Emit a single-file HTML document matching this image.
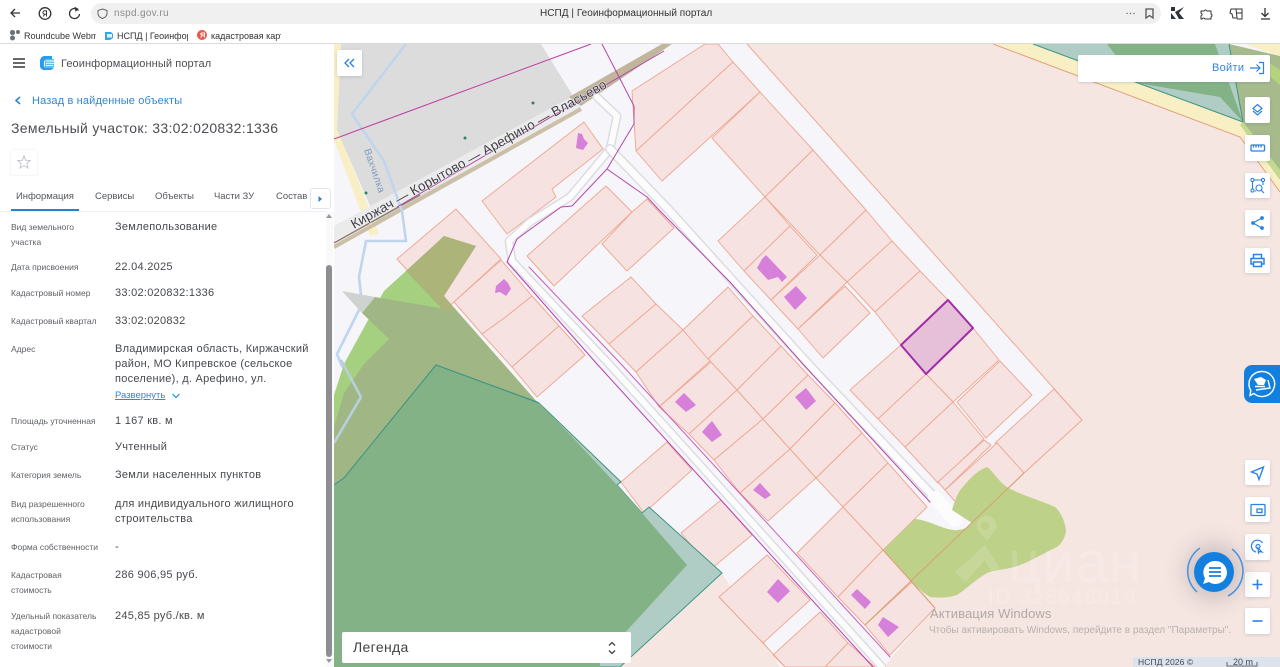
<!DOCTYPE html>
<html lang="ru"><head><meta charset="utf-8"><title>НСПД | Геоинформационный портал</title>
<style>
html,body{margin:0;padding:0;width:1280px;height:667px;overflow:hidden;background:#fff;font-family:"Liberation Sans","Noto Sans CJK SC",sans-serif}
#w{position:absolute;left:0;top:0;width:1280px;height:667px;overflow:hidden;filter:blur(.35px)}
#map{position:absolute;left:0;top:0}
.t{position:absolute;white-space:nowrap;line-height:14px;height:14px}
.l{font-size:8.5px;color:#5e6166;letter-spacing:0;left:11px}
.v{font-size:11px;color:#46494e;letter-spacing:.27px;left:115px;margin-top:1px}
.tab{font-size:9.5px;color:#54575c;top:190px;letter-spacing:-.03px}
.btn{position:absolute;background:#fff;border-radius:2px;box-shadow:0 1px 3px rgba(70,90,120,.22);left:1245px;width:25px;height:25px}
.btn svg{position:absolute;left:0;top:0}
.bar{position:absolute;left:0;top:0;width:1280px;height:44px;background:#fff;border-bottom:1px solid #dcdcdc;box-sizing:border-box}
</style></head><body><div id="w">
<svg id="map" width="1280" height="667" viewBox="0 0 1280 667">
<defs><clipPath id="c"><rect x="334" y="44" width="946" height="623"/></clipPath></defs>
<g clip-path="url(#c)">
<rect x="334" y="44" width="946" height="623" fill="#f5f5fa"/>
<!-- top-left -->
<polygon points="334,44 341,44 337,127 379,234 370,236 334,140" fill="#f9efc4"/>
<polygon points="341,44 541,44 581,109 377,222 337,130" fill="#dcdcdc"/>
<polygon points="334,226 571,97 581,109 334,241" fill="#ebebec"/>
<polyline points="334,247 377,223 581,109" fill="none" stroke="#cbbfa7" stroke-width="4"/>
<polygon points="569,97 662,44 672,44 581,106" fill="#c1b69c"/>
<polyline points="334,243 420,195" fill="none" stroke="#8d7d6e" stroke-width="1.5"/>
<polyline points="406,44 352,114 384,161 402,211 406,241 366,241 359,277 362,304 337,354 341,364 361,397 334,443" fill="none" stroke="#bfd5ee" stroke-width="2.6"/>
<polyline points="334,139 591,44" fill="none" stroke="#c0399f" stroke-width="1"/>
<polyline points="397,207 664,51" fill="none" stroke="#b548a8" stroke-width="1"/>
<circle cx="533" cy="103" r="1.5" fill="#2e8468"/><circle cx="465" cy="138" r="1.5" fill="#2e8468"/><circle cx="366" cy="193" r="1.5" fill="#2e8468"/>
<text transform="translate(364,150) rotate(71)" font-size="10" fill="#7f9dbf" letter-spacing=".3" font-family="Liberation Sans">Вахчилка</text>
<!-- top right -->
<polygon points="993,44 1240,137 1280,192 1280,170 1243,122 1033,44" fill="#f8efc5"/>
<polygon points="1033,44 1229,44 1243,122" fill="#afcdc5"/>
<polygon points="1107,44 1215,44 1243,122 1220,97 1137,83" fill="#84b287"/>
<polygon points="1229,44 1280,44 1280,56 1250,44" fill="#dddfe0"/>
<polygon points="1229,44 1280,56 1280,170 1243,122" fill="#a7ba8c"/>
<polygon points="1244,44 1280,44 1280,56" fill="#f8efc5"/>
<polygon points="1265,60 1280,70 1280,85 1268,75" fill="#b5d27d"/>
<polygon points="1243,122 1280,170 1280,180 1240,125" fill="#c4d98f"/>
<polyline points="1033,44 1243,122" fill="none" stroke="#3f9583" stroke-width="1"/>
<polyline points="1229,44 1243,122" fill="none" stroke="#3f9583" stroke-width="1"/>
<!-- big pink -->
<polygon points="993,44 1240,137 1280,192 1280,667 620,667 722,573 780,667 885,667 892,657 935,608 912,580 1024,473 1082,420 747,44" fill="#f6e6e2"/>
<polyline points="993,44 1240,137 1280,192" fill="none" stroke="#e2a27f" stroke-width="1"/>
<polyline points="747,44 1082,420 1024,473 912,580" fill="none" stroke="#efa993" stroke-width="1"/>
<!-- parcels -->
<g fill="#f6e3e1" stroke="#efa993" stroke-width=".95" stroke-linejoin="round">
<polygon points="632,91 705,44 718,44 733,62 636,151"/>
<polygon points="733,62 760,92 662,181 636,151"/>
<polygon points="760,92 813,150 765,197 712,138"/>
<polygon points="813,150 866,210 820,255 765,197"/>
<polygon points="866,210 892,241 847,282 820,255"/>
<polygon points="892,241 920,271 875,312 847,282"/>
<polygon points="920,271 948,300 901,345 875,312"/>
<polygon points="973,328 999,360 953,402 926,374"/>
<polygon points="1000,361 1032,395 986,438 957,402"/>
<polygon points="1054,389 1082,420 1024,473 995,443"/>
<polygon points="718,241 765,197 790,226 744,271"/>
<polygon points="744,271 790,226 817,255 771,300"/>
<polygon points="771,300 820,255 847,282 798,329"/>
<polygon points="798,329 845,286 870,313 823,358"/>
<polygon points="901,345 926,374 878,419 850,390"/>
<polygon points="926,374 953,402 905,447 878,419"/>
<polygon points="953,402 984,439 938,483 905,447"/>
<polygon points="984,440 991,445 945,490 938,482"/>
<polygon points="997,443 1024,473 973,522 945,490"/>
<polygon points="527,256 606,186 632,212 554,286"/>
<polygon points="632,212 647,199 674,228 627,271 602,244"/>
<polygon points="582,316 631,277 656,304 609,344"/>
<polygon points="609,344 656,304 683,330 636,372"/>
<polygon points="636,372 683,330 710,361 659,407"/>
<polygon points="683,330 728,287 753,316 708,359"/>
<polygon points="708,359 753,316 781,346 737,390"/>
<polygon points="659,407 711,362 737,390 689,434"/>
<polygon points="689,434 737,390 763,419 714,460"/>
<polygon points="714,460 763,419 790,449 740,493"/>
<polygon points="781,346 808,375 763,419 737,390"/>
<polygon points="808,375 835,403 790,449 763,419"/>
<polygon points="835,403 862,433 816,478 790,449"/>
<polygon points="862,433 888,463 843,507 816,478"/>
<polygon points="888,463 927,507 883,550 843,507"/>
<polygon points="740,493 790,449 816,478 768,521"/>
<polygon points="797,553 843,507 883,550 838,597"/>
<polygon points="838,597 883,550 912,582 865,625"/>
<polygon points="865,625 912,582 935,608 890,655"/>
<polygon points="482,201 584,122 603,149 552,189 556,197 507,234"/>
<polygon points="397,259 456,209 501,259 454,302 444,311"/>
<polygon points="454,302 501,260 532,296 507,316 482,334"/>
<polygon points="482,334 507,316 532,296 559,326 512,367"/>
<polygon points="512,367 559,326 585,355 537,397"/>
<polygon points="621,482 667,442 692,470 644,513"/>
<polygon points="681,533 721,500 752,535 711,569"/>
<polygon points="719,597 767,555 810,600 763,643"/>
<polygon points="773,655 820,612 848,643 825,667 785,667"/>
<polygon points="825,667 848,643 875,667"/>
<polyline points="719,597 763,643 785,667" fill="none"/>
</g>
<polygon points="901,345 948,300 973,328 926,374" fill="#e6bfd8" stroke="#a12ca6" stroke-width="2" stroke-linejoin="round"/>
<!-- roads -->
<g fill="none" stroke-linejoin="round" stroke-linecap="round">
<polyline points="597,97 617,116 610,149 570,197 530,222 509,241 512,261 609,364 882,667" stroke="#dcdde2" stroke-width="9"/>
<polyline points="597,97 617,116 610,149 570,197 530,222 509,241 512,261 609,364 882,667" stroke="#fcfcfd" stroke-width="6"/>
<polyline points="610,149 667,208 809,365 935,498" stroke="#dcdde2" stroke-width="10"/>
<polyline points="610,149 667,208 809,365 935,498" stroke="#fcfcfd" stroke-width="7"/>
<polyline points="935,498 955,520" stroke="#fcfcfd" stroke-width="14"/>
<polyline points="529,267 621,364 890,657" stroke="#c95dbb" stroke-width="1"/>
<polyline points="507,262 597,364 873,667" stroke="#b93fb0" stroke-width="1"/>
<polyline points="602,44 634,106 634,124 607,169 572,206 561,207 517,239 507,262" stroke="#b548a8" stroke-width="1"/>
<polyline points="607,169 647,197 660,211 730,282 803,364 930,502" stroke="#b548a8" stroke-width="1"/>
</g>
<!-- houses -->
<g fill="#d680da">
<polygon points="578,133 582,134 584,139 588,143 583,150 576,148"/>
<polygon points="504,279 508,283 511,289 506,296 500,292 495,293 496,286"/>
<polygon points="766,255 787,277 782,282 778,277 768,280 757,268 762,259"/>
<polygon points="796,286 807,298 795,310 784,297"/>
<polygon points="684,393 696,405 686,412 675,402"/>
<polygon points="712,421 722,435 712,442 702,432 708,425"/>
<polygon points="806,388 816,401 806,410 795,397"/>
<polygon points="760,483 771,495 765,499 753,490"/>
<polygon points="778,579 790,591 778,603 767,592"/>
<polygon points="857,589 871,602 865,609 851,595"/>
<polygon points="883,617 899,627 888,637 878,625"/>
</g>
<!-- green blob -->
<path d="M987,467 C992,470 1000,483 1007,487 C1020,495 1040,500 1055,507 C1062,513 1066,525 1066,532 C1064,540 1060,545 1057,547 C1040,555 1025,565 1010,568 C1000,570 992,571 987,573 C975,580 965,590 957,595 C948,598 938,598 930,597 C922,592 917,587 912,582 L883,550 L915,519 C928,520 940,528 953,530 C960,531 968,528 972,523 L952,510 C955,500 958,492 962,488 C970,478 978,470 987,467Z" fill="#bed189"/>
<polyline points="1024,473 912,580 865,625" fill="none" stroke="#d9a070" stroke-width="1"/>
<polyline points="883,550 935,608" fill="none" stroke="#dc9f7a" stroke-width="1"/>
<!-- left green -->
<polygon points="342,291 375,297 362,313" fill="#cfd3cf"/>
<polygon points="444,236 476,246 444,296 457,311 537,402 436,365 344,478 334,485 334,395 344,364 384,291 406,271" fill="#a4d07f"/>
<polygon points="375,297 457,311 537,402 436,365 344,478 334,485 334,427 344,393 364,364 389,339 362,313" fill="#a0b785"/>
<polygon points="444,236 476,246 444,296 457,311 444,311 406,271" fill="#adb47a"/>
<polygon points="537,402 539,403 621,482 617,485 642,513 649,507 722,573 620,667 334,667 334,485 344,478 436,365" fill="#afcdc5" stroke="#3f9583" stroke-width="1"/>
<polygon points="436,365 539,403 575,440 617,485 642,513 687,565 600,660 600,667 334,667 334,485 344,478" fill="#84b287"/>
<polyline points="436,365 344,478 334,485" fill="none" stroke="#3f9583" stroke-width="1"/>
<polyline points="436,365 539,403" fill="none" stroke="#3f9583" stroke-width="1"/>
<polyline points="361,397 334,443" fill="none" stroke="#b9cfdc" stroke-width="2.6"/>
<polyline points="341,360 361,397" fill="none" stroke="#b9cfdc" stroke-width="2.6"/>
<!-- road label -->
<text transform="translate(354,229) rotate(-29.2)" font-size="13.5" fill="#3f3f45" letter-spacing=".08" font-family="Liberation Sans" stroke="#f4f4f6" stroke-width="1" paint-order="stroke">Киржач — Корытово — Арефино — Власьево</text>
<!-- watermark -->
<g opacity=".14" fill="#fff">
<path d="M955,572 L985,545 L1000,568 L993,575 L985,560 L966,582Z"/>
<path d="M985,516 a10,10 0 0 1 11,13 l-9,12 -10,-13 a10,10 0 0 1 8,-12Zm0,6 a4,4 0 1 0 .1,0Z"/>
<text x="1008" y="582" font-size="58" font-family="Liberation Sans" letter-spacing="1">циан</text>
<text x="988" y="604" font-size="21" font-family="Liberation Sans" letter-spacing="1.4">ID 328548019</text>
</g>
<text x="930" y="618" font-size="13" fill="#b1a9a7" font-family="Liberation Sans" letter-spacing=".1">Активация Windows</text>
<text x="929" y="633" font-size="10" fill="#b8b0ae" font-family="Liberation Sans">Чтобы активировать Windows, перейдите в раздел "Параметры".</text>
<rect x="1133" y="657" width="147" height="10" fill="#dde3ec"/>
</g>
</svg>

<!-- sidebar -->
<div style="position:absolute;left:0;top:44px;width:334px;height:623px;background:#fff"></div>
<div style="position:absolute;left:0;top:211px;width:326px;height:1px;background:#eef0f3"></div>
<div style="position:absolute;left:326px;top:212px;width:7px;height:455px;background:#f9f9f9"></div>
<div style="position:absolute;left:326px;top:265px;width:6px;height:392px;background:#8e8d90;border-radius:3px"></div>
<svg style="position:absolute;left:325px;top:213px" width="8" height="6"><polygon points="4,1 7,5 1,5" fill="#9a9a9a"/></svg>
<svg style="position:absolute;left:325px;top:658px" width="8" height="6"><polygon points="4,5 7,1 1,1" fill="#9a9a9a"/></svg>

<!-- browser bar -->
<div class="bar"></div>
<div style="position:absolute;left:91px;top:3px;width:1070px;height:21px;background:#f0f0f0;border-radius:11px"></div>
<svg style="position:absolute;left:0;top:0" width="1280" height="44" fill="none" stroke="#333" stroke-width="1.3">
<path d="M20,13 H11 M15,9 L11,13 L15,17"/>
<circle cx="45" cy="13.5" r="5.8"/><path d="M46.5,10.5 V16.5 M46.5,10.8 H44.6 a1.6,1.6 0 0 0 0,3.4 H46.5 M44.8,14.2 L43,16.5" stroke-width="1"/>
<path d="M78.5,10.5 A5,5 0 1 0 79.5,14" /><path d="M74.5,7 L78,9 L75.5,11.5" fill="#333" stroke-width=".6"/>
<path d="M102.5,9 L107,10.5 V14 Q106.5,17 102.5,18.5 Q98.5,17 98,14 V10.5Z" stroke="#666" stroke-width="1"/>
<circle cx="1127" cy="13.5" r=".7" fill="#666" stroke="none"/><circle cx="1130.5" cy="13.5" r=".7" fill="#666" stroke="none"/><circle cx="1134" cy="13.5" r=".7" fill="#666" stroke="none"/>
<path d="M1146,9 H1153 V18 L1149.5,15.5 L1146,18Z" stroke="#555"/>
<path d="M1171,7 L1175,7 L1175,11 L1171,11Z M1171,13 L1176,19 L1171,19Z M1175,12 L1184,7 L1179,13 L1184,19 L1179,19Z" fill="#2e3338" stroke="none"/>
<path d="M1201,11 H1204 a1.6,1.6 0 0 1 3,0 H1211 V14 a1.6,1.6 0 0 1 0,3 V19 H1205 a1.6,1.6 0 0 0 -3,0 H1201 V16 a1.6,1.6 0 0 0 0,-3Z" stroke-width="1"/>
<path d="M1231,9 H1236 L1237,18 H1233 L1232,14 L1230,13Z M1236,9 H1242 V19 H1237 M1237,13 H1242" stroke-width="1"/>
<path d="M1265,8 V16 M1261.5,13 L1265,16.5 L1268.5,13 M1261,19 H1270"/>
</svg>
<div class="t" style="left:114px;top:7px;font-size:10px;color:#8b8b8b;letter-spacing:.3px">nspd.gov.ru</div>
<div class="t" style="left:540px;top:7px;font-size:10px;color:#333;letter-spacing:.04px">НСПД | Геоинформационный портал</div>
<svg style="position:absolute;left:9px;top:29px" width="280" height="13">
<circle cx="3.5" cy="3.5" r="2.6" fill="#6d7378"/><circle cx="9" cy="3" r="2" fill="#6d7378"/><circle cx="3.5" cy="9" r="2.500" fill="#6d7378"/>
<path d="M96,3 h6 l2,2 v4 l-3,2 h-5Z" fill="#32a6e8"/><rect x="98" y="5" width="5" height="3.5" fill="#dff2fc"/>
<circle cx="193" cy="6" r="5" fill="#e8574a"/>
<text x="191" y="8.7" font-size="7.5" fill="#fff" font-family="Liberation Sans" font-weight="bold">Я</text>
</svg>
<div class="t" style="left:24px;top:29px;font-size:9px;color:#333;width:72px;overflow:hidden">Roundcube Webm</div>
<div class="t" style="left:117px;top:29px;font-size:9px;color:#333;width:71px;overflow:hidden">НСПД | Геоинфор</div>
<div class="t" style="left:211px;top:29px;font-size:9px;color:#333;width:70px;overflow:hidden">кадастровая карт</div>

<!-- sidebar header -->
<svg style="position:absolute;left:0;top:50px" width="60" height="26">
<path d="M13,9 H25 M13,13 H25 M13,17 H25" stroke="#33363a" stroke-width="1.5"/>
<path d="M46,6 h6 v3 h-5 a4,4 0 0 0 -3,3 v3 a3,3 0 0 0 3,3 h7 l-3,2 h-5 a5,5 0 0 1 -6,-3 v-7 a5,5 0 0 1 6,-4Z" fill="#2d9bea"/>
<path d="M45,9 h9 v7 a2,2 0 0 1 -2,2 h-5 a2,2 0 0 1 -2,-2Z" fill="#57bcef"/>
<path d="M46,11 h8 M46,13.3 h8 M46,15.6 h7" stroke="#fff" stroke-width=".9"/>
</svg>
<div class="t" style="left:61px;top:57px;font-size:11px;color:#4c4f54;letter-spacing:.1px">Геоинформационный портал</div>
<svg style="position:absolute;left:12px;top:95px" width="14" height="12"><path d="M8,2 L4,5.5 L8,9" fill="none" stroke="#2b82dc" stroke-width="1.5"/></svg>
<div class="t" style="left:32px;top:94px;font-size:11px;color:#2f86dc;letter-spacing:.15px">Назад в найденные объекты</div>
<div class="t" style="left:11px;top:121px;font-size:14px;color:#4b4e52;letter-spacing:.32px">Земельный участок: 33:02:020832:1336</div>
<div style="position:absolute;left:11px;top:150px;width:26px;height:25px;box-shadow:0 0 2px rgba(80,90,110,.14);border-radius:2px"></div>
<svg style="position:absolute;left:17px;top:155px" width="14" height="14"><polygon points="7,1 8.800,5.300 13.300,5.600 9.900,8.600 11,13 7,10.600 3,13 4.100,8.600 .7,5.600 5.200,5.300" fill="none" stroke="#c5c6c9" stroke-width="1"/></svg>

<div class="t tab" style="left:16px">Информация</div>
<div class="t tab" style="left:95px">Сервисы</div>
<div class="t tab" style="left:155px">Объекты</div>
<div class="t tab" style="left:214px">Части ЗУ</div>
<div class="t tab" style="left:276px">Состав</div>
<div style="position:absolute;left:11px;top:209px;width:68px;height:2px;background:#2481d7"></div>
<div style="position:absolute;left:310px;top:188px;width:21px;height:21px;background:#fff;border:1px solid #dfe6f0;border-radius:3px;box-sizing:border-box"></div>
<svg style="position:absolute;left:317px;top:195px" width="6" height="8"><polygon points="1.5,1 5,4 1.5,7" fill="#2b7fd4"/></svg>

<div class="t l" style="top:220px">Вид земельного</div><div class="t l" style="top:235px">участка</div>
<div class="t l" style="top:260px">Дата присвоения</div>
<div class="t l" style="top:286px">Кадастровый номер</div>
<div class="t l" style="top:314px">Кадастровый квартал</div>
<div class="t l" style="top:342px">Адрес</div>
<div class="t l" style="top:414px">Площадь уточненная</div>
<div class="t l" style="top:440px">Статус</div>
<div class="t l" style="top:468px">Категория земель</div>
<div class="t l" style="top:497px">Вид разрешенного</div><div class="t l" style="top:512px">использования</div>
<div class="t l" style="top:540px">Форма собственности</div>
<div class="t l" style="top:568px">Кадастровая</div><div class="t l" style="top:583px">стоимость</div>
<div class="t l" style="top:609px">Удельный показатель</div><div class="t l" style="top:624px">кадастровой</div><div class="t l" style="top:639px">стоимости</div>

<div class="t v" style="top:219px">Землепользование</div>
<div class="t v" style="top:259px">22.04.2025</div>
<div class="t v" style="top:285px">33:02:020832:1336</div>
<div class="t v" style="top:313px">33:02:020832</div>
<div class="t v" style="top:341px">Владимирская область, Киржачский</div>
<div class="t v" style="top:356px">район, МО Кипревское (сельское</div>
<div class="t v" style="top:371px">поселение), д. Арефино, ул.</div>
<div class="t" style="left:115px;top:389px;font-size:9.500px;color:#2f86dc;text-decoration:underline">Развернуть</div>
<svg style="position:absolute;left:171px;top:392px" width="10" height="8"><path d="M1.5,2 L5,5.5 L8.5,2" fill="none" stroke="#2f86dc" stroke-width="1.2"/></svg>
<div class="t v" style="top:413px">1 167 кв. м</div>
<div class="t v" style="top:439px">Учтенный</div>
<div class="t v" style="top:467px">Земли населенных пунктов</div>
<div class="t v" style="top:496px">для индивидуального жилищного</div>
<div class="t v" style="top:511px">строительства</div>
<div class="t v" style="top:539px">-</div>
<div class="t v" style="top:567px">286 906,95 руб.</div>
<div class="t v" style="top:608px">245,85 руб./кв. м</div>

<!-- map controls -->
<div class="btn" style="left:337px;top:50px;width:25px;height:26px"><svg width="25" height="26" fill="none" stroke="#2b82e0" stroke-width="1.3"><path d="M12,9 L8,13 L12,17 M17,9 L13,13 L17,17"/></svg></div>
<div style="position:absolute;left:1078px;top:55px;width:192px;height:27px;background:#fff;border-radius:2px;box-shadow:0 1px 2px rgba(70,90,120,.2)"></div>
<div class="t" style="left:1212px;top:61px;font-size:11px;color:#2f86dc;letter-spacing:.3px">Войти</div>
<svg style="position:absolute;left:1248px;top:60px" width="18" height="16" fill="none" stroke="#2b82e0" stroke-width="1.2"><path d="M2,8 H12 M8.500,4.500 L12,8 L8.500,11.500 M11,2.500 H15.500 V13.500 H11"/></svg>

<div class="btn" style="top:97px;height:26px"><svg width="25" height="26" fill="none" stroke="#2b82e0" stroke-width="1.2"><path d="M12.5,7.5 L17,11.5 L12.5,15 L8,11.5Z"/><path d="M8,14 L12.5,18 L17,14"/></svg></div>
<div class="btn" style="top:135px;height:26px"><svg width="25" height="26" fill="none" stroke="#2b82e0" stroke-width="1.3"><rect x="6" y="10" width="13.5" height="6" rx="1"/><path d="M8.5,10 v2.5 M11,10 v2.5 M13.5,10 v2.5 M16,10 v2.5"/></svg></div>
<div class="btn" style="top:173px"><svg width="25" height="25" fill="none" stroke="#2b82e0" stroke-width="1.1"><circle cx="7.5" cy="7" r="1.6"/><circle cx="18" cy="7" r="1.6"/><circle cx="7.5" cy="17.5" r="1.6"/><circle cx="14" cy="15" r="3"/><path d="M9.5,7 H16 M7.5,9 V15.5 M18,9 V12 M10,18 H11 M16.2,17.2 L19,20"/></svg></div>
<div class="btn" style="top:210px;height:26px"><svg width="25" height="26" fill="none" stroke="#2b82e0" stroke-width="1.2"><circle cx="17" cy="8" r="1.3" fill="#2b82e0"/><circle cx="8" cy="13" r="1.3" fill="#2b82e0"/><circle cx="17" cy="18" r="1.3" fill="#2b82e0"/><path d="M17,8 L8,13 L17,18"/></svg></div>
<div class="btn" style="top:248px"><svg width="25" height="25" fill="none" stroke="#2b82e0" stroke-width="1.5"><path d="M8.5,10 V6.5 H16.5 V10 M8.5,16 H6 V10.5 H19 V16 H16.5"/><rect x="8.5" y="14" width="8" height="4.5"/></svg></div>

<div style="position:absolute;left:1244px;top:365px;width:36px;height:38px;background:#1380e0;border-radius:8px 0 0 8px"></div>
<svg style="position:absolute;left:1244px;top:365px" width="36" height="38" fill="none" stroke="#fff" stroke-width="1.4"><path d="M18,6.5 a12.5,12.5 0 1 1 -8,22 l-4,2 l.8,-5 A12.5,12.5 0 0 1 18,6.5Z"/><path d="M24,15 L26,23 L12,25 M11,21.500 H21" /><polygon points="10,14 17,12 22,15 20,20 14,20" fill="#fff" stroke="none"/></svg>

<div class="btn" style="top:460px"><svg width="25" height="25" fill="none" stroke="#2b82e0" stroke-width="1.4"><path d="M18.5,7 L6.5,12 L12,14 L14,19.5Z"/></svg></div>
<div class="btn" style="top:497px"><svg width="25" height="25" fill="none" stroke="#2b82e0" stroke-width="1.3"><rect x="6" y="7.5" width="14" height="11" rx="1"/><rect x="12" y="12" width="5" height="3.5"/></svg></div>
<div class="btn" style="top:534px;height:26px"><svg width="25" height="26" fill="none" stroke="#2b82e0" stroke-width="1.2"><path d="M17.5,9 A6,6 0 1 0 11,18"/><circle cx="13" cy="12.5" r="2"/><path d="M13,14 L17,18 L14.5,17.5 L13.5,19Z"/></svg></div>
<div class="btn" style="top:572px"><svg width="25" height="25" stroke="#2b82e0" stroke-width="1.6"><path d="M12.5,7.5 V17.5 M7.5,12.5 H17.5"/></svg></div>
<div class="btn" style="top:608px;height:26px"><svg width="25" height="26" stroke="#2b82e0" stroke-width="1.6"><path d="M7.5,13 H17.5"/></svg></div>

<!-- chat -->
<div style="position:absolute;left:1194px;top:552px;width:40px;height:40px;border-radius:50%;background:#1380e0;box-shadow:0 0 22px 8px rgba(90,90,100,.28)"></div>
<svg style="position:absolute;left:1180px;top:540px" width="70" height="64" fill="none">
<path d="M20,8 A28,28 0 0 0 17,52" stroke="#4a94e0" stroke-width="1.6"/>
<path d="M52,9 A28,28 0 0 1 48,56" stroke="#4a94e0" stroke-width="1.6"/>
<path d="M35,21 a11.500,11.500 0 1 1 -6,21 l-6,2 l2,-5.500 A11.500,11.500 0 0 1 35,21Z" fill="#fff"/>
<path d="M29,28 H41 M29,32 H41 M29,36 H41" stroke="#1380e0" stroke-width="1.8"/>
</svg>

<!-- legend -->
<div style="position:absolute;left:342px;top:632px;width:289px;height:31px;background:#fff;border-radius:2px"></div>
<div class="t" style="left:353px;top:640px;font-size:14px;color:#3f4246;letter-spacing:.35px">Легенда</div>
<svg style="position:absolute;left:606px;top:640px" width="12" height="16" fill="none" stroke="#3f4246" stroke-width="1.3"><path d="M3,5.500 L6,2.500 L9,5.500 M3,10.500 L6,13.500 L9,10.500"/></svg>

<div class="t" style="left:1138px;top:655px;font-size:8.5px;color:#3e4a58;letter-spacing:.12px">НСПД 2026 ©</div>
<div class="t" style="left:1233px;top:655px;font-size:9px;color:#3e4a58">20 m</div>
<svg style="position:absolute;left:1226px;top:660px" width="34" height="7" fill="none" stroke="#3e4a58"><path d="M1,2 V6 H31 V2" stroke-width=".8"/></svg>
</div></body></html>
